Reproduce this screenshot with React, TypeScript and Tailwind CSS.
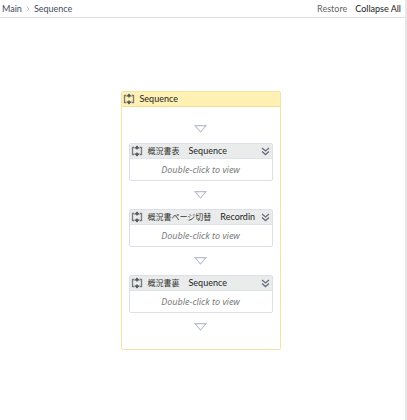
import React, { useState } from 'react';
import { ChevronRight } from 'lucide-react';

interface Activity {
  id: number;
  title: string;
  kind: string;
}

const activities: Activity[] = [
  { id: 1, title: '概況書表', kind: 'Sequence' },
  { id: 2, title: '概況書ページ切替', kind: 'Recordin' },
  { id: 3, title: '概況書裏', kind: 'Sequence' },
];

const SequenceIcon = () => (
  <svg viewBox="0 0 12 12" className="w-3 h-3 shrink-0" fill="none" stroke="#777a7f" aria-hidden="true">
    <path d="M3.4 2.5H1.5v7h1.9M8.6 2.5h1.9v7H8.6" strokeWidth="1.3" />
    <path d="M3.2 3.6L6 0.4l2.8 3.2zM3.2 8.4L6 11.6l2.8-3.2z" fill="#4c4f54" stroke="none" />
    <path d="M6 3v1.6M6 7.4V9" stroke="#4c4f54" strokeWidth="1.4" />
  </svg>
);

const ExpandIcon = () => (
  <svg viewBox="0 0 9 9" className="w-[9px] h-[9px]" fill="none" stroke="#666d7c" strokeWidth="1.3" aria-hidden="true">
    <path d="M1 1l3.5 3L8 1M1 4.6l3.5 3L8 4.6" />
  </svg>
);

const Connector = () => (
  <div className="flex h-7 items-center justify-center">
    <svg viewBox="0 0 13 8" className="w-[13px] h-2" fill="#fff" stroke="#b9bdce" strokeWidth="1.1" aria-hidden="true">
      <path d="M1 0.6h11L6.5 7z" />
    </svg>
  </div>
);

interface ActivityCardProps {
  activity: Activity;
  onOpen: (title: string) => void;
}

const ActivityCard: React.FC<ActivityCardProps> = ({ activity, onOpen }) => (
  <section
    onDoubleClick={() => onOpen(activity.title)}
    className="rounded-xs border border-[#dcdfe8] bg-white"
  >
    <header className="flex h-[15px] items-center gap-1 border-b border-[#dfe2e8] bg-[#eaecec] pl-px pr-0.5">
      <SequenceIcon />
      <h2 className="flex flex-1 gap-[9px] whitespace-nowrap pl-px text-[9px] leading-[14px] text-[#222]">
        <span className="text-[8px] text-[#333]">{activity.title}</span>
        <span>{activity.kind}</span>
      </h2>
      <button type="button" aria-label="Expand" onClick={() => onOpen(activity.title)} className="shrink-0">
        <ExpandIcon />
      </button>
    </header>
    <p className="text-center font-['Noto_Sans'] text-[9px] leading-[21px] italic text-[#7c7c7c]">Double-click to view</p>
  </section>
);

const App: React.FC = () => {
  const [path, setPath] = useState(['Main', 'Sequence']);
  const [collapsed, setCollapsed] = useState(false);

  return (
    <div className="flex min-h-screen flex-col border-r-2 border-[#e6e6e8] bg-white font-['Lato','Noto_Sans_CJK_JP',sans-serif] text-[9px] text-[#444a5c]">
      <div className="flex h-[18px] items-center justify-between border-b border-[#dedede] pl-0.5 pr-1">
        <nav className="flex items-center gap-0.5">
          {path.map((name, i) => (
            <React.Fragment key={name}>
              {i > 0 && <ChevronRight className="w-2 h-2 text-[#c4c6cf]" strokeWidth={3} />}
              <a href="#" onClick={() => setPath(path.slice(0, i + 1))}>{name}</a>
            </React.Fragment>
          ))}
        </nav>
        <div className="flex gap-2">
          <button type="button" onClick={() => setCollapsed(false)} className="text-[#666]">Restore</button>
          <button type="button" onClick={() => setCollapsed(true)} className="text-[#222]">Collapse All</button>
        </div>
      </div>

      <main className="flex justify-center pr-1 pt-[73px]">
        <div className="w-40 rounded-xs border border-[#f5e3a4] bg-white">
          <header className="flex h-[15px] items-center gap-1 border-b border-[#f3dd94] bg-[#fff0b3] pl-px">
            <SequenceIcon />
            <h1 className="pl-px text-[9px] leading-[14px] text-[#222]">Sequence</h1>
          </header>
          {!collapsed && (
            <div className="px-[7px] pt-2 pb-2">
              <Connector />
              {activities.map((activity) => (
                <React.Fragment key={activity.id}>
                  <ActivityCard activity={activity} onOpen={(title) => setPath([...path, title])} />
                  <Connector />
                </React.Fragment>
              ))}
            </div>
          )}
        </div>
      </main>
    </div>
  );
};

export default App;
